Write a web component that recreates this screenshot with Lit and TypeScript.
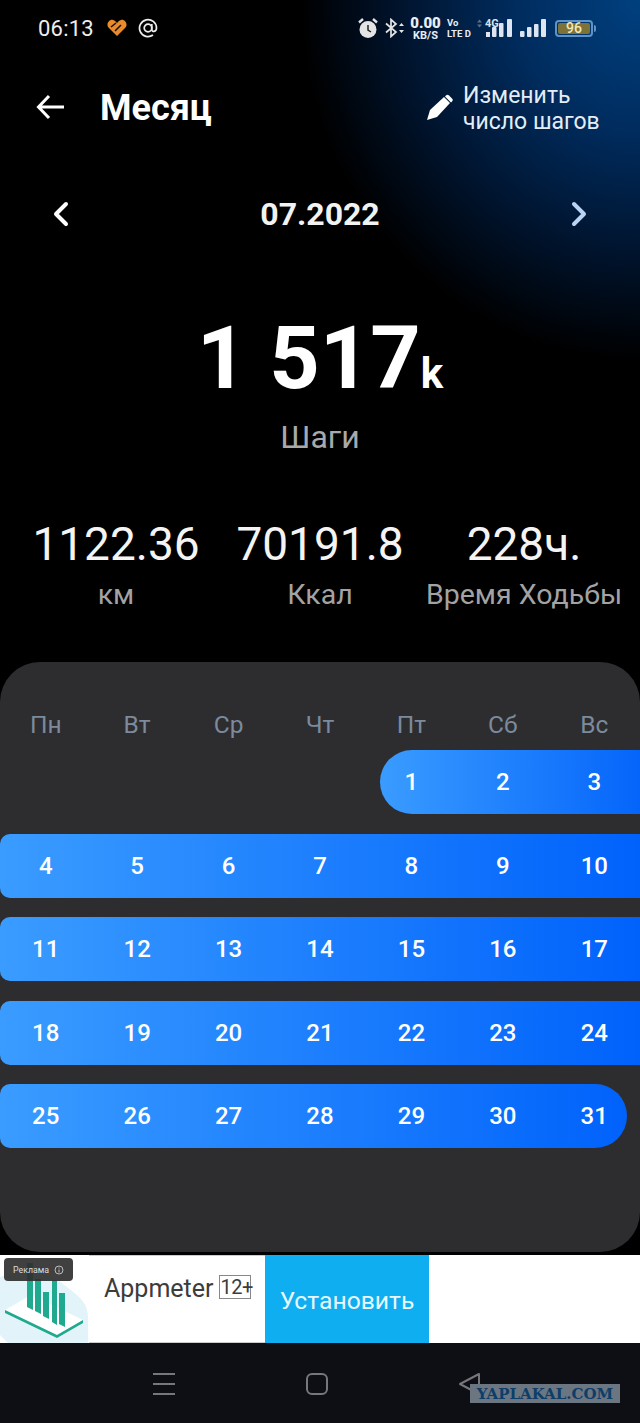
import { LitElement, html, css, svg } from "lit";
import { customElement } from "lit/decorators.js";

const DAYS = ["Пн", "Вт", "Ср", "Чт", "Пт", "Сб", "Вс"];
const WEEKS: number[][] = [
  [1, 2, 3],
  [4, 5, 6, 7, 8, 9, 10],
  [11, 12, 13, 14, 15, 16, 17],
  [18, 19, 20, 21, 22, 23, 24],
  [25, 26, 27, 28, 29, 30, 31],
];

@customElement("app-root")
export class AppRoot extends LitElement {
  static styles = css`
    :host { display: block; width: 640px; height: 1423px; overflow: hidden; font-family: Roboto, "Liberation Sans", sans-serif; color: #fff; }
    .screen { position: relative; width: 640px; height: 1423px; display: flex; flex-direction: column; background: #000; }
    .top { height: 662px; flex: none; display: flex; flex-direction: column; background: radial-gradient(ellipse 340px 360px at 100% 0, #00407f 0%, #002d60 35%, #00142e 70%, #000 100%); }
    .status { height: 56px; flex: none; display: flex; align-items: center; padding: 0 0 0 38px; }
    .time { font-size: 22px; color: #eee; width: 67px; letter-spacing: 0.2px; }
    .heart { margin-left: 2px; }
    .at { margin-left: 11px; }
    .status-right { margin-left: auto; margin-right: 44px; display: flex; align-items: center; }
    .bt { margin-left: 6px; }
    .speed { display: flex; flex-direction: column; align-items: center; font-weight: 700; color: #e8eef5; margin-left: 4px; width: 31px; }
    .speed b { font-size: 15px; line-height: 14px; }
    .speed i { font-style: normal; font-size: 11px; line-height: 11px; }
    .volte { display: flex; flex-direction: column; font-size: 9.500px; font-weight: 700; line-height: 11px; color: #e8eef5; margin-left: 6px; width: 22px; white-space: nowrap; }
    .net { position: relative; margin-left: 8px; width: 35px; height: 36px; }
    .net span { position: absolute; left: 8px; top: 7px; font-size: 11px; line-height: 13px; font-weight: 700; color: #d8e2ee; }
    .net svg { display: block; }
    .bars { margin-left: 8px; }
    .battery { display: flex; align-items: center; margin-left: 9px; }
    .battery-body { width: 32px; height: 11px; border: 2px solid #5f93c6; border-radius: 4px; padding: 1px; display: flex; }
    .battery-fill { flex: 1; background: #7d7238; border-radius: 2px; font-size: 14px; line-height: 11px; text-align: center; font-weight: 500; color: #f0e8b8; }
    .battery-tip { width: 2px; height: 7px; background: #5f93c6; margin-left: 1px; border-radius: 0 2px 2px 0; }

    .header { height: 102px; flex: none; display: flex; align-items: center; box-sizing: border-box; padding-left: 36px; }
    .title { font-size: 36px; font-weight: 700; margin-left: 36px; margin-top: 2px; }
    .edit { margin-left: auto; width: 213px; display: flex; align-items: center; font-size: 23px; line-height: 26px; color: #e4edf6; }
    .edit svg { margin-right: 10px; flex: none; }
    .edit span { margin-top: 3px; }

    .month { height: 60px; flex: none; margin-top: 26px; display: flex; align-items: center; justify-content: space-between; padding: 0 52px; }
    .month-label { font-size: 32px; font-weight: 700; color: #f2f2f2; }

    .steps { margin-top: 70px; display: flex; flex-direction: column; align-items: center; }
    .steps-num { font-size: 88px; font-weight: 700; line-height: 88px; }
    .steps-num span { font-size: 42px; }
    .steps-label { font-size: 32px; line-height: 36px; color: #a9a9a9; margin-top: 1px; }

    .stats { margin-top: 62px; display: grid; grid-template-columns: repeat(3, 1fr); padding: 0 14px; text-align: center; }
    .stat-val { font-size: 46px; line-height: 54px; color: #f4f4f4; }
    .stat-label { font-size: 28.500px; line-height: 38px; color: #a3a3a3; margin-top: 5px; white-space: nowrap; }

    .panel { height: 590px; flex: none; background: #2d2d2f; border-radius: 40px; display: flex; flex-direction: column; }
    .weekdays { display: grid; grid-template-columns: repeat(7, 1fr); height: 88px; padding-top: 49px; box-sizing: border-box; font-size: 24.500px; line-height: 28px; color: #7b8a9c; text-align: center; }
    .weeks { display: flex; flex-direction: column; gap: 19.500px; }
    .week { display: grid; grid-template-columns: repeat(7, 1fr); height: 64px; align-items: center; text-align: center; font-size: 24px; font-weight: 500; border-radius: 10px 0 0 10px; background: linear-gradient(90deg, #3a9cff, #0062fb); }
    .week.first { background: none; }
    .week.first::before { content: ""; grid-column: 5 / 8; grid-row: 1; margin-left: 14.300px; height: 64px; border-radius: 32px 0 0 32px; background: linear-gradient(90deg, #3a9cff, #0565fb); }
    .week.first span { grid-row: 1; }
    .week.first span:nth-child(1) { grid-column: 5; }
    .week.first span:nth-child(2) { grid-column: 6; }
    .week.first span:nth-child(3) { grid-column: 7; }
    .week.last { margin-right: 13px; border-radius: 10px 32px 32px 10px; grid-template-columns: repeat(7, 91.430px); }

    .gap { height: 3px; flex: none; background: #000; }
    .ad { position: relative; height: 88px; flex: none; background: #fff; display: flex; }
    .ad-art { width: 89px; flex: none; }
    .ad-info { width: 176px; flex: none; box-sizing: border-box; padding: 17px 0 0 15px; display: flex; align-items: flex-start; color: #3c3c3c; font-size: 25px; line-height: 32px; border-top: 1px solid #ccc; border-bottom: 1px solid #ccc; }
    .rating { margin-left: 6px; margin-top: 2px; border: 1px solid #888; font-size: 20px; line-height: 22px; width: 30px; height: 22px; text-align: center; letter-spacing: -0.500px; }
    .install { width: 164px; flex: none; background: #0eaef0; display: flex; align-items: center; justify-content: center; font-size: 24.700px; padding-top: 2px; box-sizing: border-box; color: #e8f7fd; }
    .ad-tag { position: absolute; left: 4px; top: 3px; width: 69px; height: 23px; background: rgba(48, 48, 48, 0.92); border-radius: 4px; display: flex; align-items: center; padding-left: 9px; box-sizing: border-box; font-size: 8.800px; color: #ddd; }
    .ad-tag svg { margin-left: 5px; }

    .nav { position: relative; flex: 1; background: #0e0f14; display: flex; }
    .nav svg { position: absolute; }
    .mark { position: absolute; left: 470px; top: 41px; width: 150px; height: 19px; background: #6c7681; display: flex; align-items: center; justify-content: center; font-family: "DejaVu Serif", serif; font-weight: 700; font-size: 15px; color: #0d3e69; }
  `;

  private statusRight() {
    return html`<div class="status-right">
      <svg width="20" height="22" viewBox="0 0 20 22">
        <circle cx="10" cy="12.500" r="8.500" fill="#e4e4e4"/>
        <path d="M10 8v5l3 2" stroke="#222" stroke-width="1.500" fill="none"/>
        <path d="M1 5.500 5 2M19 5.500 15 2" stroke="#e4e4e4" stroke-width="2.400"/>
      </svg>
      <svg class="bt" width="22" height="20" viewBox="0 0 22 20">
        <path d="M2 5.500 12 14l-5 4.500V1.500L12 6 2 14.500" stroke="#e4e4e4" stroke-width="1.700" fill="none"/>
        <path d="M15 8l2.500-3L20 8zM15 12l2.500 3 2.500-3z" fill="#e4e4e4"/>
      </svg>
      <div class="speed"><b>0.00</b><i>KB/S</i></div>
      <div class="volte"><span>Vo</span><span>LTE D</span></div>
      <div class="net">
        <span>4G</span>
        <svg width="35" height="36" viewBox="0 0 35 36">
          <path d="M0 12.500l2.500-3 2.500 3zM0 14.500l2.500 3 2.500-3z" fill="#5d6f86"/>
          <rect x="9" y="22" width="4" height="5" fill="#dde6f0"/>
          <rect x="15" y="17" width="4.500" height="10" rx="1" fill="#dde6f0"/>
          <rect x="22" y="13" width="4.500" height="14" rx="1" fill="#dde6f0"/>
          <rect x="30" y="9" width="5" height="18" rx="1" fill="#dde6f0"/>
        </svg>
      </div>
      <svg class="bars" width="26" height="36" viewBox="0 0 26 36">
        <rect x="0" y="21" width="4.500" height="6" rx="1" fill="#dde6f0"/>
        <rect x="7" y="17" width="4.500" height="10" rx="1" fill="#dde6f0"/>
        <rect x="14" y="14" width="4.500" height="13" rx="1" fill="#dde6f0"/>
        <rect x="21" y="9" width="5" height="18" rx="1" fill="#dde6f0"/>
      </svg>
      <div class="battery">
        <div class="battery-body"><div class="battery-fill">96</div></div>
        <div class="battery-tip"></div>
      </div>
    </div>`;
  }

  private adArt() {
    return svg`<svg class="ad-art" width="89" height="88" viewBox="0 0 89 88">
      <path d="M0 22C20 14 48 16 62 28c10 9 26 16 26 34v26H8L0 80z" fill="#e2f4f9"/>
      <path d="M5 55 31 40l52 25-26 15z" fill="#fff"/>
      <path d="M5 55 57 80l26-15v3L57 83 5 58z" fill="#1fa98e"/>
      <path d="M27 8h6v47l-6-3zM35 24h6v35l-6-3zM43 37h6v27l-6-3zM52 25h5v45l-5-3zM59 38h6v34l-6-3z" fill="#1fa98e"/>
    </svg>`;
  }

  render() {
    return html`<div class="screen">
      <div class="top">
        <div class="status">
          <span class="time">06:13</span>
          <svg class="heart" width="20" height="18" viewBox="0 0 20 18">
            <path d="M10 17 1 8C-1 4 3 0 6 1c2 .5 3 2 4 3 1-1 2-2.500 4-3 3-1 7 3 5 7z" fill="#e98a2b"/>
            <path d="M4 8l5-4M8 12l6-6" stroke="#111" stroke-width="1.500"/>
          </svg>
          <svg class="at" width="20" height="20" viewBox="0 0 20 20" fill="none" stroke="#eee" stroke-width="1.700">
            <circle cx="10" cy="10" r="3.800"/>
            <path d="M13.800 6v5.500c0 3 4.700 2.500 4.700-1.500a8.500 8.500 0 1 0-3.500 7"/>
          </svg>
          ${this.statusRight()}
        </div>
        <div class="header">
          <svg width="28" height="26" viewBox="0 0 28 26" fill="none" stroke="#fff" stroke-width="3">
            <path d="M28 13H3M13 2 2.500 13 13 24"/>
          </svg>
          <span class="title">Месяц</span>
          <div class="edit">
            <svg width="26" height="26" viewBox="0 0 26 26">
              <path d="M0 26 3 16 17 3l6 6L10 23z" fill="#fff"/>
              <path d="M19 1.500c1-1 2-1 3 0l3 3c1 1 1 2 0 3l-1 1-6-6z" fill="#fff"/>
            </svg>
            <span>Изменить<br />число шагов</span>
          </div>
        </div>
        <div class="month">
          <svg width="18" height="26" viewBox="0 0 18 26" fill="none" stroke="#fff" stroke-width="4" stroke-linecap="round" stroke-linejoin="round">
            <path d="M14 3 4 13l10 10"/>
          </svg>
          <span class="month-label">07.2022</span>
          <svg width="18" height="26" viewBox="0 0 18 26" fill="none" stroke="#bcd4f4" stroke-width="4" stroke-linecap="round" stroke-linejoin="round">
            <path d="M4 3l10 10L4 23"/>
          </svg>
        </div>
        <div class="steps">
          <div class="steps-num">1 517<span>k</span></div>
          <div class="steps-label">Шаги</div>
        </div>
        <div class="stats">
          <div><div class="stat-val">1122.36</div><div class="stat-label">км</div></div>
          <div><div class="stat-val">70191.8</div><div class="stat-label">Ккал</div></div>
          <div><div class="stat-val">228ч.</div><div class="stat-label">Время Ходьбы</div></div>
        </div>
      </div>
      <div class="panel">
        <div class="weekdays">${DAYS.map((d) => html`<span>${d}</span>`)}</div>
        <div class="weeks">
          ${WEEKS.map((w, i) => html`<div class="week ${i === 0 ? "first" : ""} ${i === 4 ? "last" : ""}">
            ${w.map((d) => html`<span>${d}</span>`)}
          </div>`)}
        </div>
      </div>
      <div class="gap"></div>
      <div class="ad">
        ${this.adArt()}
        <div class="ad-info"><span>Appmeter</span><span class="rating">12+</span></div>
        <div class="install">Установить</div>
        <div class="ad-tag">Реклама
          <svg width="10" height="10" viewBox="0 0 10 10" fill="none" stroke="#bbb"><circle cx="5" cy="5" r="4"/><path d="M5 4.500V7.500M5 2.500v1"/></svg>
        </div>
      </div>
      <div class="nav">
        <svg style="left:153px;top:30px" width="22" height="22" viewBox="0 0 22 22" stroke="#77777b" stroke-width="2">
          <path d="M0 1h22M0 11h22M0 21h22"/>
        </svg>
        <svg style="left:306px;top:30px" width="22" height="22" viewBox="0 0 22 22" fill="none" stroke="#77777b" stroke-width="2">
          <rect x="1" y="1" width="20" height="20" rx="5"/>
        </svg>
        <svg style="left:458px;top:29px" width="23" height="24" viewBox="0 0 23 24" fill="none" stroke="#77777b" stroke-width="2" stroke-linejoin="round">
          <path d="M21 2v20L2 12z"/>
        </svg>
        <div class="mark">YAPLAKAL.COM</div>
      </div>
    </div>`;
  }
}
